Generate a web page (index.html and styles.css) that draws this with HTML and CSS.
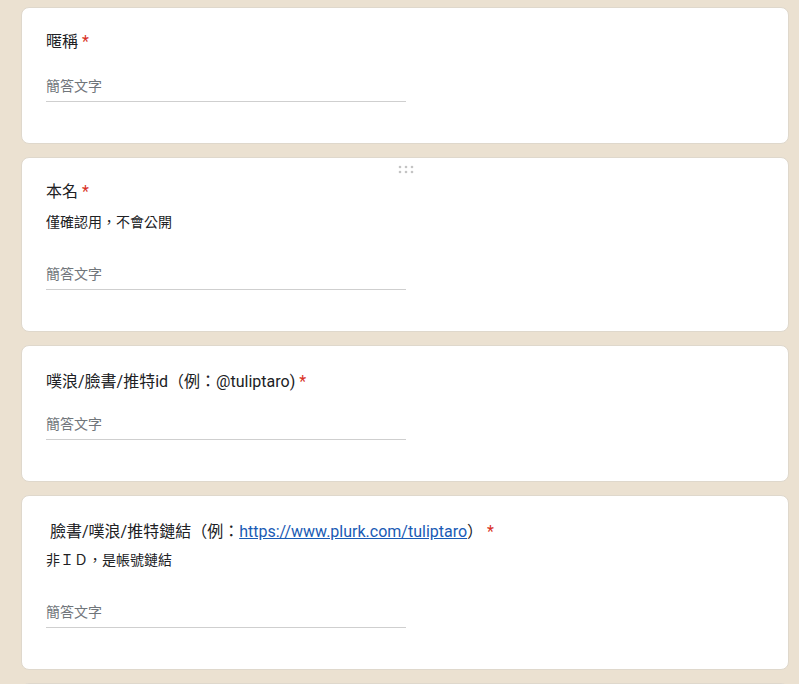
FILE: index.html
```html
<!DOCTYPE html>
<html lang="zh-Hant">
<head>
    <meta charset="UTF-8">
    <meta name="viewport" content="width=device-width, initial-scale=1.0">
    <title>表單</title>
    <link rel="stylesheet" href="styles.css">
</head>
<body>
    <div class="form">
        <div class="card">
            <div class="title">暱稱<span class="req"> *</span></div>
            <div class="answer"><input type="text" placeholder="簡答文字"></div>
        </div>

        <div class="card">
            <svg class="handle" width="16" height="9" viewBox="0 0 16 9">
                <circle cx="2" cy="2" r="1.3"/><circle cx="8" cy="2" r="1.3"/><circle cx="14" cy="2" r="1.3"/>
                <circle cx="2" cy="7" r="1.3"/><circle cx="8" cy="7" r="1.3"/><circle cx="14" cy="7" r="1.3"/>
            </svg>
            <div class="title">本名<span class="req"> *</span></div>
            <div class="desc">僅確認用，不會公開</div>
            <div class="answer"><input type="text" placeholder="簡答文字"></div>
        </div>

        <div class="card">
            <div class="title title-latin">噗浪/臉書/推特id（例：@tuliptaro)<span class="req"> *</span></div>
            <div class="answer"><input type="text" placeholder="簡答文字"></div>
        </div>

        <div class="card">
            <div class="title title-latin">&nbsp;臉書/噗浪/推特鏈結（例：<a href="#">https://www.plurk.com/tuliptaro</a>）<span class="req"> *</span></div>
            <div class="desc">非ＩＤ，是帳號鏈結</div>
            <div class="answer"><input type="text" placeholder="簡答文字"></div>
        </div>

        <div class="card">
            <div class="title">&nbsp;</div>
            <div class="answer"><input type="text" placeholder="簡答文字"></div>
        </div>
    </div>
</body>
</html>
```

FILE: styles.css
```css
body {
    margin: 0;
    background-color: #ebe1d1;
    font-family: Roboto, "Noto Sans CJK TC", sans-serif;
    color: #202124;
}

.form {
    display: flex;
    flex-direction: column;
    gap: 13px;
    width: 768px;
    margin: 7px 0 0 21px;
}

.card {
    position: relative;
    background-color: white;
    border: 1px solid #dfd8cc;
    border-radius: 8px;
    padding: 22px 24px 25px;
}

.handle {
    position: absolute;
    top: 7px;
    left: 376px;
    fill: #c4c4c4;
}

.title {
    font-size: 16px;
    line-height: 24px;
}

.title-latin {
    padding-top: 2px;
    margin-bottom: -2px;
}

.title a {
    color: #1a5bb5;
}

.req {
    color: #d93025;
}

.desc {
    font-size: 14px;
    line-height: 20px;
    margin: 8px 0 10px;
}

.answer {
    padding: 17px 0 16px;
}

.answer input {
    display: block;
    box-sizing: border-box;
    width: 360px;
    height: 31px;
    padding: 0;
    border: none;
    border-bottom: 1px solid #cfcfcf;
    font-family: Roboto, "Noto Sans CJK TC", sans-serif;
    font-size: 14px;
    outline: none;
    background: transparent;
}

.answer input::placeholder {
    color: #70757a;
}
```
